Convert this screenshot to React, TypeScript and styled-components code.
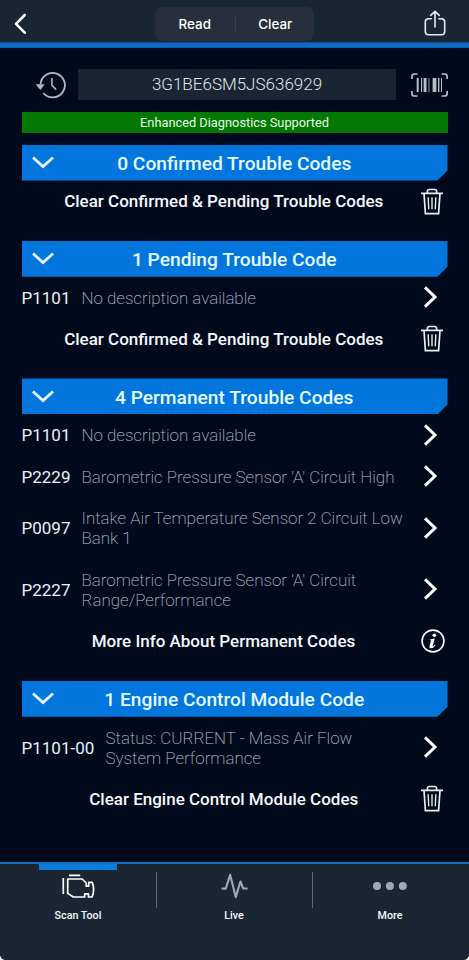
import React from "react";
import styled, { createGlobalStyle, css } from "styled-components";

const Global = createGlobalStyle`
  *, *::before, *::after { box-sizing: border-box; }
  body { margin: 0; background: #fff; font-family: Roboto, "Liberation Sans", sans-serif; }
  button { font: inherit; color: inherit; border: 0; padding: 0; margin: 0; background: none; }
  svg { display: block; flex: none; }
`;

const Screen = styled.div`
  width: 469px;
  height: 960px;
  display: flex;
  flex-direction: column;
  overflow: hidden;
  background: #010a1d;
  color: #f4f8fc;
  border-radius: 0 0 6px 6px;
`;

const Header = styled.header`
  height: 48px;
  flex: none;
  display: grid;
  grid-template-columns: 155px 159px 1fr;
  align-items: start;
  background:
    linear-gradient(#134a84, #0f6cc6 35%, #0f6cc6 80%, #0c5199) left bottom / 100% 6px no-repeat,
    #1b2634;
`;

const BackButton = styled.button`
  display: flex;
  padding: 13px 0 0 13px;
`;

const Segments = styled.div`
  display: grid;
  grid-template-columns: 1fr 1fr;
  height: 34px;
  margin-top: 7px;
  border-radius: 8px;
  background: #292e3c;
`;

const Segment = styled.button<{ $divided?: boolean }>`
  font: 500 13.4px/34px Inter, sans-serif;
  color: #fff;
  ${(p) =>
    p.$divided &&
    css`
      padding-left: 2px;
      background: linear-gradient(#3a3e4b, #3a3e4b) left center / 1px 18px no-repeat;
    `}
`;

const ShareButton = styled.button`
  justify-self: end;
  padding: 9.5px 22.5px 0 0;
`;

const Content = styled.main`
  flex: 1;
  padding: 21px 21.5px 0;
`;

const VinBar = styled.div`
  display: grid;
  grid-template-columns: 56.5px 318px 1fr;
  align-items: center;
  height: 31px;
`;

const HistoryButton = styled.button`
  padding-left: 13.5px;
`;

const VinField = styled.div`
  height: 31px;
  background: #1a2533;
  color: #dfe4ea;
  font-size: 17px;
  font-weight: 300;
  line-height: 31px;
  text-align: center;
`;

const BarcodeButton = styled.button`
  justify-self: end;
`;

const Support = styled.div`
  height: 21px;
  margin: 12px 0 11.5px;
  background: #037803;
  color: #e6fbe6;
  font-size: 12.8px;
  line-height: 21px;
  text-align: center;
`;

const Section = styled.section`
  margin-bottom: 19px;
`;

const SectionHead = styled.h2`
  display: flex;
  align-items: center;
  height: 36px;
  margin: 0;
  padding: 0 0 0 10.5px;
  background: #0276dc;
  clip-path: polygon(0 0, 100% 0, 100% 26px, calc(100% - 10px) 100%, 0 100%);
`;

const SectionTitle = styled.span`
  flex: 1;
  padding: 1.6px 33px 0 0;
  text-align: center;
  font-size: 19.2px;
  font-weight: 500;
  color: #e4fbff;
`;

const CodeRow = styled.div`
  display: flex;
  align-items: center;
  min-height: 41.3px;
  padding: 10.8px 10px 10.4px 0;
  line-height: 20.2px;
  & > svg { margin: -2px 0 -1px; }
`;

const Code = styled.span<{ $wide?: boolean }>`
  flex: none;
  width: ${(p) => (p.$wide ? 84 : 60)}px;
  font-size: 17px;
  color: #edf1f6;
`;

const Description = styled.span`
  flex: 1;
  font-size: 16.93px;
  font-weight: 200;
  color: #b9bfca;
  white-space: pre-line;
`;

const ActionRow = styled.div<{ $info?: boolean }>`
  display: flex;
  align-items: center;
  height: 41.3px;
  padding-right: ${(p) => (p.$info ? 3 : 4.5)}px;
`;

const ActionLabel = styled.span`
  flex: 1;
  padding-left: 5px;
  text-align: center;
  font-size: 17px;
  font-weight: 500;
`;

const TabBar = styled.nav`
  height: 98.5px;
  flex: none;
  display: grid;
  grid-template-columns: 156px 156px 156px;
  background: #1b2632;
  border-top: 2.5px solid #0e6fbd;
`;

const Tab = styled.button<{ $active?: boolean }>`
  display: flex;
  flex-direction: column;
  align-items: center;
  color: ${(p) => (p.$active ? "#ffffff" : "#a3a9b0")};
  &:not(:first-child) {
    background: linear-gradient(#626b75, #626b75) left 8px / 1px 36px no-repeat;
  }
  &::before {
    content: "";
    width: 78px;
    height: 6px;
    background: ${(p) => (p.$active ? "#0c7bdb" : "transparent")};
  }
`;

const TabIcon = styled.span`
  display: flex;
  align-items: center;
  justify-content: center;
  height: 32px;
`;

const TabLabel = styled.span`
  margin-top: 7.6px;
  font-size: 10.7px;
  font-weight: 500;
  line-height: 14px;
  color: #f4f8fb;
`;

const BackIcon = () => (
  <svg width="14" height="22" viewBox="0 0 14 22" fill="none" stroke="#fff" strokeWidth="2.6" strokeLinecap="round" strokeLinejoin="round">
    <path d="M11.7 2 3 10.8l8.7 8.9" />
  </svg>
);

const ShareIcon = () => (
  <svg width="24" height="28" viewBox="0 0 24 28" fill="none" stroke="#e5e9ed" strokeWidth="1.6" strokeLinecap="round" strokeLinejoin="round">
    <path d="M8.2 8.7H5.5C3.3 8.7 2.3 9.8 2.3 12v9.5c0 2.2 1 3.3 3.2 3.3h13c2.2 0 3.2-1.1 3.2-3.3V12c0-2.2-1-3.3-3.2-3.3h-2.7M12 17V1.7M7.7 5.4 12 1.3l4.3 4.1" />
  </svg>
);

const HistoryIcon = () => (
  <svg width="31" height="30" viewBox="0 0 31 30" fill="none" stroke="#b3b7c1" strokeWidth="1.8">
    <path d="M5.5 14.5A12.2 12.2 0 1 1 8.3 23" />
    <path d="M16.9 8v7.2l4.3 4.4" strokeWidth="1.6" />
    <path d="M.7 14.3h9L5.4 20z" fill="#b3b7c1" stroke="none" />
  </svg>
);

const BARS: [number, number][] = [
  [5.7, 2], [10, 1.1], [12.6, 2.9], [17.6, 0.8], [21.6, 3.8], [27, 1.4], [30, 1],
];

const BarcodeIcon = () => (
  <svg width="37" height="24" viewBox="0 0 37 24" fill="none" stroke="#b9bdc6" strokeWidth="1.7">
    <path d="M6.5 1H3.5Q.9 1 .9 3.5V6M30.5 1h3q2.6 0 2.6 2.5V6M.9 18v2.5q0 2.5 2.6 2.5h3M36.1 18v2.5q0 2.5-2.6 2.5h-3" />
    <g fill="#b9bdc6" stroke="none">
      {BARS.map(([x, w]) => (
        <rect key={x} x={x} y="5" width={w} height="14" />
      ))}
    </g>
  </svg>
);

const ChevronDown = () => (
  <svg width="22" height="13" viewBox="0 0 22 13" fill="none" stroke="#e4fbff" strokeWidth="2.8">
    <path d="M1 1.5 11 10.5 21 1.5" />
  </svg>
);

const ChevronRight = () => (
  <svg width="15" height="22" viewBox="0 0 15 22" fill="none" stroke="#fff" strokeWidth="3">
    <path d="M2 1.4 12 11 2 20.6" />
  </svg>
);

const TrashIcon = () => (
  <svg width="22" height="27" viewBox="0 0 22 27" fill="none" stroke="#e9edf2" strokeWidth="1.7">
    <path d="M0 5.3h22M3 5.3l1.4 20.3h13.2L19 5.3M6.4 5V3.4Q6.4 1.5 8.3 1.5h5.4q1.900 0 1.900 1.900V5" />
    <path d="M7.2 9.3l.5 12M11 9.3v12M14.8 9.3l-.5 12" strokeWidth="1.4" />
  </svg>
);

const InfoIcon = () => (
  <svg width="24" height="24" viewBox="0 0 24 24">
    <circle cx="12" cy="12" r="10.9" fill="none" stroke="#fff" strokeWidth="1.6" />
    <circle cx="13.3" cy="6.3" r="1.8" fill="#fff" />
    <path d="M8.9 10.4 13.8 9.5 11.7 16.8Q11.5 17.7 12.1 17.3L13.9 15.6 14.5 16.2Q12.3 19.2 10 19.2 7.9 19.2 8.6 16.8L10 11.7Q10.1 11.1 8.7 11.1Z" fill="#fff" />
  </svg>
);

const EngineIcon = () => (
  <svg width="34" height="26" viewBox="0 0 34 26" fill="none" stroke="currentColor" strokeWidth="1.7" strokeLinejoin="round">
    <path d="M8 2.3h11.2M2.3 5v16" />
    <path d="M6.7 6h14.5l4 4v3.2h2.5V9.4h3.5q1.4 3.2 1.4 7.2t-1.5 7.4h-3.6v-3.1h-3.8V24H12.4l-5.7-3.6z" />
  </svg>
);

const PulseIcon = () => (
  <svg width="27" height="28" viewBox="0 0 27 28" fill="none" stroke="currentColor" strokeWidth="2.1" strokeLinejoin="round">
    <path d="M.6 16.6h4.2L9.1 2.8l5.7 22.3 4.6-15.6 2.8 7h4.4" />
  </svg>
);

const DotsIcon = () => (
  <svg width="34" height="8" viewBox="0 0 34 8" fill="currentColor">
    <circle cx="4" cy="4" r="4" />
    <circle cx="16.9" cy="4" r="4" />
    <circle cx="29.8" cy="4" r="4" />
  </svg>
);

type SectionData = {
  title: string;
  codes: [string, string][];
  action: string;
  info?: boolean;
};

const CLEAR_ALL = "Clear Confirmed & Pending Trouble Codes";

const SECTIONS: SectionData[] = [
  { title: "0 Confirmed Trouble Codes", codes: [], action: CLEAR_ALL },
  { title: "1 Pending Trouble Code", codes: [["P1101", "No description available"]], action: CLEAR_ALL },
  {
    title: "4 Permanent Trouble Codes",
    codes: [
      ["P1101", "No description available"],
      ["P2229", "Barometric Pressure Sensor 'A' Circuit High"],
      ["P0097", "Intake Air Temperature Sensor 2 Circuit Low\nBank 1"],
      ["P2227", "Barometric Pressure Sensor 'A' Circuit\nRange/Performance"],
    ],
    action: "More Info About Permanent Codes",
    info: true,
  },
  {
    title: "1 Engine Control Module Code",
    codes: [["P1101-00", "Status: CURRENT - Mass Air Flow\nSystem Performance"]],
    action: "Clear Engine Control Module Codes",
  },
];

export default function App() {
  return (
    <>
      <Global />
      <Screen>
        <Header>
          <BackButton aria-label="Back"><BackIcon /></BackButton>
          <Segments>
            <Segment>Read</Segment>
            <Segment $divided>Clear</Segment>
          </Segments>
          <ShareButton aria-label="Share"><ShareIcon /></ShareButton>
        </Header>
        <Content>
          <VinBar>
            <HistoryButton aria-label="History"><HistoryIcon /></HistoryButton>
            <VinField>3G1BE6SM5JS636929</VinField>
            <BarcodeButton aria-label="Scan barcode"><BarcodeIcon /></BarcodeButton>
          </VinBar>
          <Support>Enhanced Diagnostics Supported</Support>
          {SECTIONS.map((s) => (
            <Section key={s.title}>
              <SectionHead>
                <ChevronDown />
                <SectionTitle>{s.title}</SectionTitle>
              </SectionHead>
              {s.codes.map(([code, text]) => (
                <CodeRow key={code}>
                  <Code $wide={code.length > 5}>{code}</Code>
                  <Description>{text}</Description>
                  <ChevronRight />
                </CodeRow>
              ))}
              <ActionRow $info={s.info}>
                <ActionLabel>{s.action}</ActionLabel>
                {s.info ? <InfoIcon /> : <TrashIcon />}
              </ActionRow>
            </Section>
          ))}
        </Content>
        <TabBar>
          <Tab $active>
            <TabIcon><EngineIcon /></TabIcon>
            <TabLabel>Scan Tool</TabLabel>
          </Tab>
          <Tab>
            <TabIcon><PulseIcon /></TabIcon>
            <TabLabel>Live</TabLabel>
          </Tab>
          <Tab>
            <TabIcon><DotsIcon /></TabIcon>
            <TabLabel>More</TabLabel>
          </Tab>
        </TabBar>
      </Screen>
    </>
  );
}
